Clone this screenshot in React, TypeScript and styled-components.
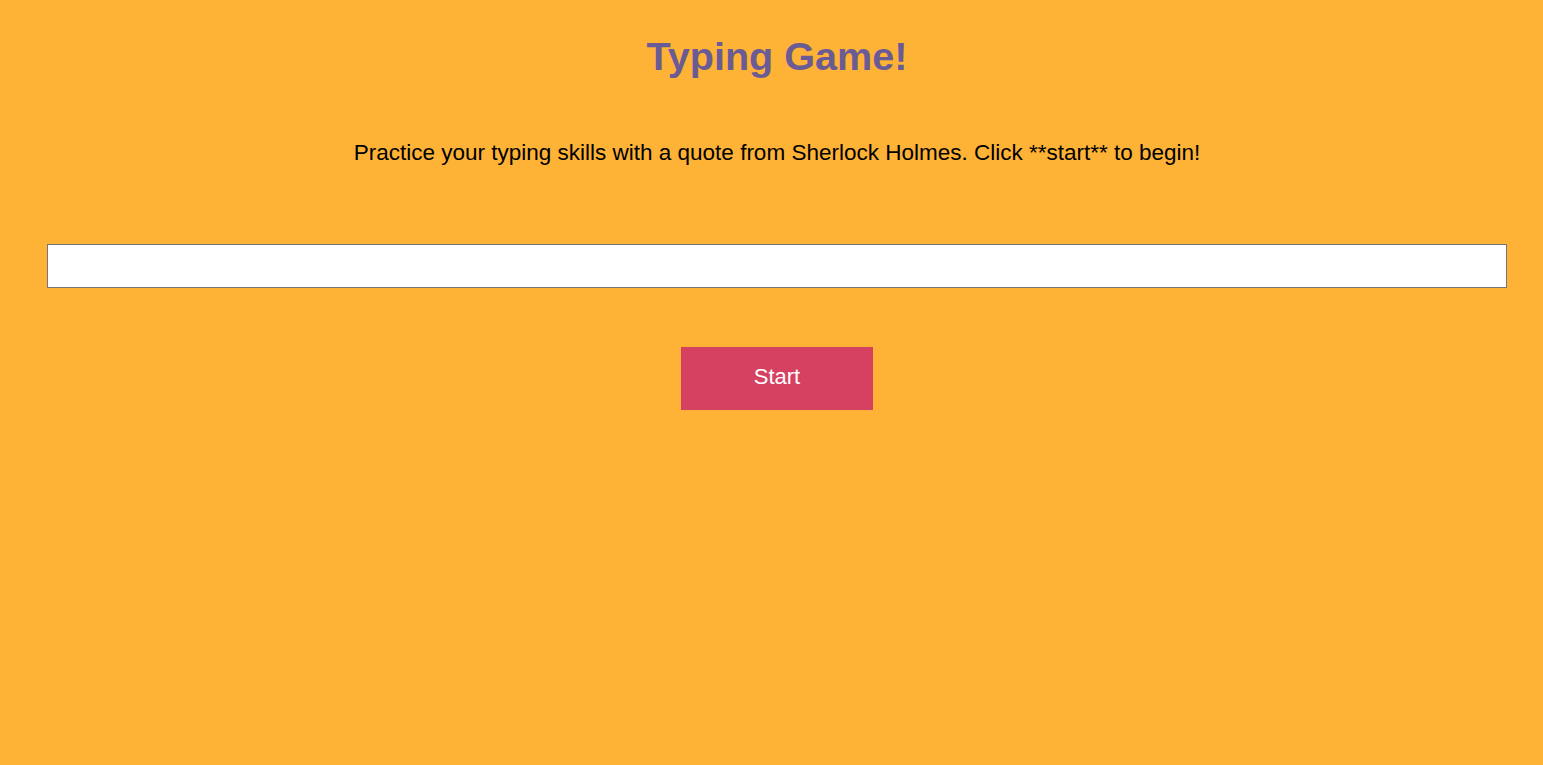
import React from "react";
import styled, { createGlobalStyle } from "styled-components";

const Global = createGlobalStyle`
  html, body {
    margin: 0;
    padding: 0;
    background: #feb236;
    font-family: "Liberation Sans", Arial, sans-serif;
  }
`;

const Page = styled.main`
  min-height: 765px;
  box-sizing: border-box;
  padding: 0 36px 0 47px;
  display: flex;
  flex-direction: column;
  align-items: stretch;
`;

const Title = styled.h1`
  margin: 30px 0 0;
  text-align: center;
  color: #6b5b95;
  font-size: 39.6px;
  font-weight: 700;
  line-height: 52px;
`;

const Intro = styled.p`
  margin: 58px 0 0;
  text-align: center;
  color: #000;
  font-size: 22.5px;
  line-height: 26px;
`;

const Input = styled.input`
  margin-top: 78px;
  height: 44px;
  box-sizing: border-box;
  border: 1px solid #767676;
  background: #fff;
  width: 100%;
  font-size: 20px;
  font-family: inherit;
`;

const Actions = styled.div`
  margin-top: 59px;
  display: flex;
  justify-content: center;
`;

const StartButton = styled.button`
  width: 192px;
  height: 63px;
  border: none;
  background: #d64161;
  color: #fff;
  font-family: inherit;
  font-size: 22px;
  padding: 0 0 4px;
  cursor: pointer;
`;

export default function App() {
  return (
    <>
      <Global />
      <Page>
        <Title>Typing Game!</Title>
        <Intro>
          Practice your typing skills with a quote from Sherlock Holmes. Click **start** to begin!
        </Intro>
        <Input type="text" aria-label="typed value" />
        <Actions>
          <StartButton>Start</StartButton>
        </Actions>
      </Page>
    </>
  );
}
